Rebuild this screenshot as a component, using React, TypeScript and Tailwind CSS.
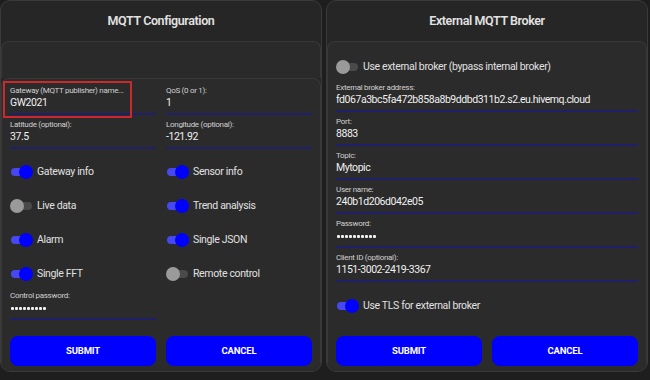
import React from "react";

const font = { fontFamily: 'Roboto, "Open Sans", sans-serif' };

function Toggle({ on }: { on: boolean }) {
  return (
    <div className="relative w-[23px] h-[14px] shrink-0">
      <div
        className={
          "absolute left-[1px] right-[1px] top-[3px] h-[8px] rounded-full " +
          (on ? "bg-[#4848f0]" : "bg-[#4a4a4a]")
        }
      />
      <div
        className={
          "absolute top-0 w-[14px] h-[14px] rounded-full " +
          (on ? "right-0 bg-[#0000ff]" : "left-0 bg-[#9a9a9a]")
        }
      />
    </div>
  );
}

function ToggleRow({ on, label }: { on: boolean; label: string }) {
  return (
    <div className="flex items-center gap-[4px] h-[14px]">
      <Toggle on={on} />
      <span className="text-[10.5px] tracking-[-0.35px] text-[#e0e0e0] leading-none whitespace-nowrap">
        {label}
      </span>
    </div>
  );
}

function Field({ label, value, dots }: { label: string; value: string; dots?: boolean }) {
  return (
    <div className="flex flex-col">
      <div className="text-[8px] tracking-[-0.3px] leading-[10px] text-[#d0d0d0] whitespace-nowrap">{label}</div>
      {dots ? (
        <div className="h-[14px] flex items-center gap-[1px] pl-[1px]">
          {Array.from({ length: value.length }).map((_, i) => (
            <span key={i} className="w-[3px] h-[3px] rounded-[1px] bg-[#f0f0f0]" />
          ))}
        </div>
      ) : (
        <div className="text-[10.5px] tracking-[-0.45px] leading-[14px] text-[#f0f0f0] whitespace-nowrap">
          {value}
        </div>
      )}
      <div className="h-[2px] bg-[#20206a] mt-[3px]" />
    </div>
  );
}

function Buttons() {
  return (
    <div className="grid grid-cols-2 gap-[10px]">
      <button className="h-[30px] rounded-[8px] bg-[#0000ff] text-white text-[9.5px] tracking-[-0.2px] font-bold">
        SUBMIT
      </button>
      <button className="h-[30px] rounded-[8px] bg-[#0000ff] text-white text-[9.5px] tracking-[-0.2px] font-bold">
        CANCEL
      </button>
    </div>
  );
}

function Panel({ title, children }: { title: string; children: React.ReactNode }) {
  return (
    <div className="flex flex-col h-[372px] rounded-[10px] border border-[#3a3a3a] bg-[#262626] overflow-hidden">
      <div className="h-[40px] shrink-0 flex items-center justify-center text-[12.5px] tracking-[-0.4px] font-semibold text-[#e2e2e2]">
        {title}
      </div>
      {children}
    </div>
  );
}

export default function App() {
  return (
    <div className="w-[650px] h-[380px] bg-[#1e1e1e] flex gap-[4px] pr-[2px]" style={font}>
      <div className="w-[322px]">
        <Panel title="MQTT Configuration">
          <div className="h-[37px] shrink-0 rounded-t-[8px] border-t border-x border-[#383838] bg-[#2a2a2a]" />
          <div className="relative flex-1 rounded-t-[8px] border-t border-x border-[#383838] bg-[#2b2b2b] px-[8px] pt-[7px] flex flex-col">
            <div className="absolute left-[1px] top-[2px] w-[129px] h-[37px] border-2 border-[#cc2a2a]" />
            <div className="grid grid-cols-2 gap-x-[10px] gap-y-[5px]">
              <Field label="Gateway (MQTT publisher) name..." value="GW2021" />
              <Field label="QoS (0 or 1):" value="1" />
              <Field label="Latitude (optional):" value="37.5" />
              <Field label="Longitude (optional):" value="-121.92" />
            </div>
            <div className="grid grid-cols-2 gap-x-[10px] gap-y-[20px] mt-[16px]">
              <ToggleRow on label="Gateway info" />
              <ToggleRow on label="Sensor info" />
              <ToggleRow on={false} label="Live data" />
              <ToggleRow on label="Trend analysis" />
              <ToggleRow on label="Alarm" />
              <ToggleRow on label="Single JSON" />
              <ToggleRow on label="Single FFT" />
              <ToggleRow on={false} label="Remote control" />
            </div>
            <div className="grid grid-cols-2 gap-x-[10px] mt-[10px]">
              <Field label="Control password:" value="•••••••••" dots />
            </div>
            <div className="mt-[16px]">
              <Buttons />
            </div>
          </div>
        </Panel>
      </div>
      <div className="w-[322px]">
        <Panel title="External MQTT Broker">
          <div className="flex-1 rounded-t-[8px] border-t border-x border-[#383838] bg-[#2b2b2b] px-[8px] pt-[18px] flex flex-col">
            <ToggleRow on={false} label="Use external broker (bypass internal broker)" />
            <div className="flex flex-col gap-[5px] mt-[9px]">
              <Field label="External broker address:" value="fd067a3bc5fa472b858a8b9ddbd311b2.s2.eu.hivemq.cloud" />
              <Field label="Port:" value="8883" />
              <Field label="Topic:" value="Mytopic" />
              <Field label="User name:" value="240b1d206d042e05" />
              <Field label="Password:" value="••••••••••" dots />
              <Field label="Client ID (optional):" value="1151-3002-2419-3367" />
            </div>
            <div className="mt-[17px]">
              <ToggleRow on label="Use TLS for external broker" />
            </div>
            <div className="mt-[23px]">
              <Buttons />
            </div>
          </div>
        </Panel>
      </div>
    </div>
  );
}
